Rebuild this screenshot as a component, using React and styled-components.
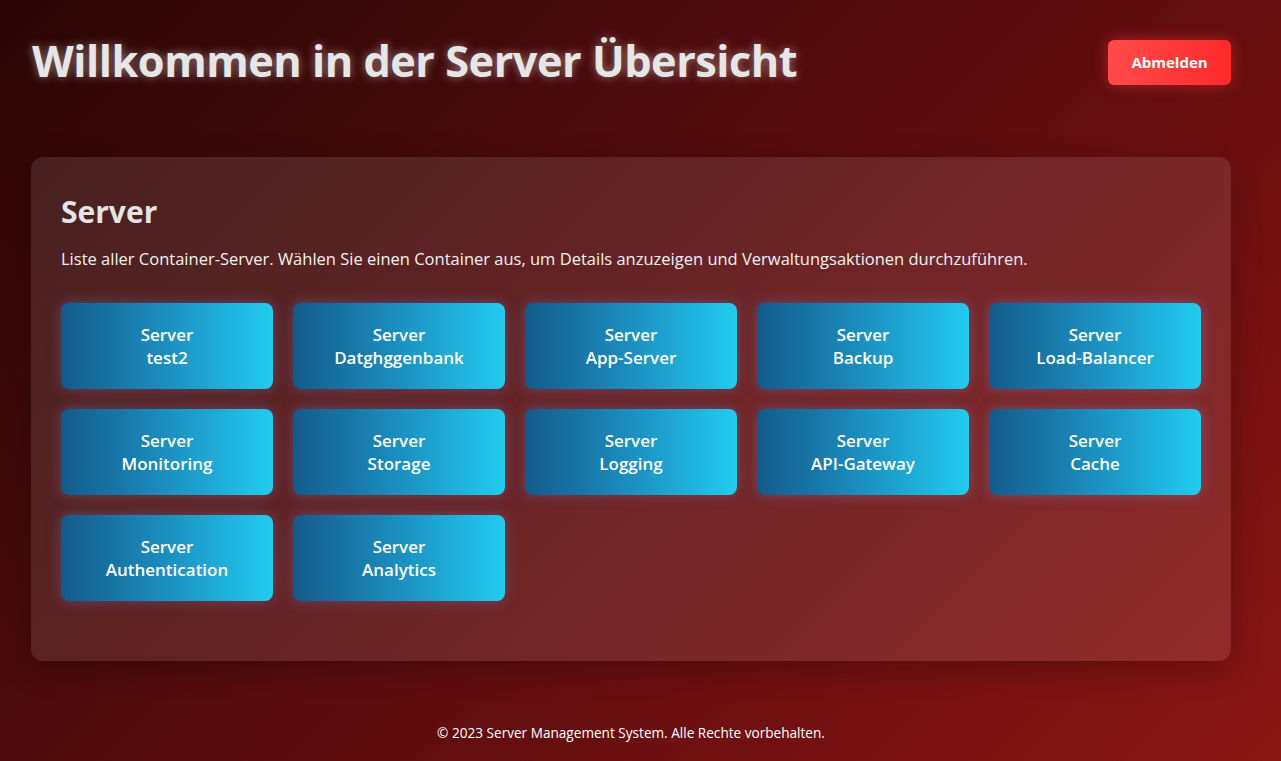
import React from "react";
import styled, { createGlobalStyle } from "styled-components";

const Global = createGlobalStyle`
  html, body { margin: 0; padding: 0; }
  body {
    font-family: "Open Sans", "Noto Sans", sans-serif;
    background: linear-gradient(135deg, #2a0606 0%, #5a0c0e 50%, #8c1515 100%);
    min-height: 761px;
    color: #fff;
  }
`;

const Page = styled.div`
  min-height: 761px;
  display: flex;
  flex-direction: column;
  padding: 0 50px 0 31px;
  box-sizing: border-box;
`;

const Header = styled.header`
  display: flex;
  justify-content: space-between;
  align-items: center;
  height: 124px;
`;

const Title = styled.h1`
  margin: 0 0 0 1px;
  font-size: 43.3px;
  font-weight: 700;
  color: #e6e6e6;
  text-shadow: 0 0 10px rgba(255, 255, 255, 0.45);
  letter-spacing: -0.5px;
  position: relative;
  top: -2px;
`;

const LogoutButton = styled.button`
  width: 123px;
  height: 45px;
  border: none;
  border-radius: 6px;
  background: linear-gradient(90deg, #ff4b4b, #ff2a2a);
  color: #fff;
  font-family: inherit;
  font-weight: 700;
  font-size: 15px;
  box-shadow: 0 0 15px rgba(255, 60, 60, 0.45);
  cursor: pointer;
`;

const Panel = styled.section`
  margin-top: 33px;
  background: rgba(255, 255, 255, 0.1);
  border-radius: 12px;
  padding: 30px 30px 60px;
  box-shadow: 0 8px 30px rgba(0, 0, 0, 0.25);
`;

const PanelTitle = styled.h2`
  margin: 4px 0 0;
  font-size: 30px;
  font-weight: 700;
  color: #e4e4e4;
`;

const Description = styled.p`
  margin: 15px 0 33px;
  font-size: 16.5px;
  color: #f2f2f2;
`;

const Grid = styled.div`
  display: grid;
  grid-template-columns: repeat(5, 212px);
  gap: 20px;
`;

const Card = styled.button`
  height: 86px;
  border: none;
  border-radius: 8px;
  background: linear-gradient(90deg, #145a8a 0%, #1b8fc0 50%, #22ccef 100%);
  color: #fff;
  font-family: inherit;
  font-weight: 600;
  font-size: 17px;
  line-height: 23px;
  box-shadow: 0 0 14px rgba(120, 140, 220, 0.35);
  display: flex;
  flex-direction: column;
  align-items: center;
  justify-content: center;
  cursor: pointer;
`;

const Footer = styled.footer`
  margin-top: auto;
  height: 58px;
  display: flex;
  align-items: center;
  justify-content: center;
  font-size: 13.6px;
  color: #fff;
`;

const servers = [
  "test2",
  "Datghggenbank",
  "App-Server",
  "Backup",
  "Load-Balancer",
  "Monitoring",
  "Storage",
  "Logging",
  "API-Gateway",
  "Cache",
  "Authentication",
  "Analytics",
];

export default function App() {
  return (
    <>
      <Global />
      <Page>
        <Header>
          <Title>Willkommen in der Server Übersicht</Title>
          <LogoutButton>Abmelden</LogoutButton>
        </Header>
        <Panel>
          <PanelTitle>Server</PanelTitle>
          <Description>
            Liste aller Container-Server. Wählen Sie einen Container aus, um Details anzuzeigen und Verwaltungsaktionen durchzuführen.
          </Description>
          <Grid>
            {servers.map((s) => (
              <Card key={s}>
                <span>Server</span>
                <span>{s}</span>
              </Card>
            ))}
          </Grid>
        </Panel>
        <Footer>© 2023 Server Management System. Alle Rechte vorbehalten.</Footer>
      </Page>
    </>
  );
}
